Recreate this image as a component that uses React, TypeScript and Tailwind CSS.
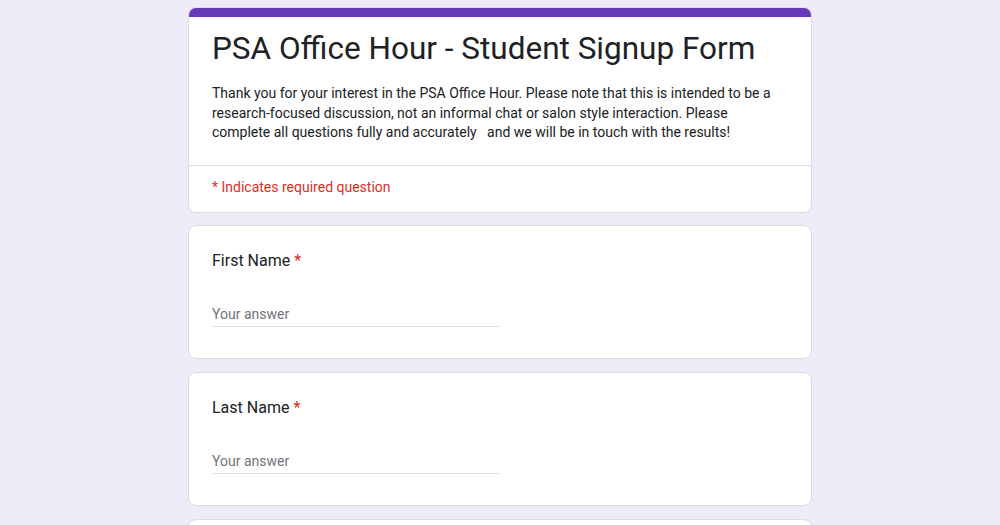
import React from "react";

function QuestionCard({ label }: { label: string }) {
  return (
    <div className="bg-white border border-[#dadce0] rounded-lg px-[23px] pt-[23px] pb-[31px]">
      <div className="text-[16px] leading-6 text-[#202124]">
        {label}
        <span className="text-[#d93025] ml-1">*</span>
      </div>
      <div className="mt-[31px] w-1/2 border-b border-[#e0e0e0] pb-[2px]">
        <div className="text-[14px] leading-5 text-[#70757a]">Your answer</div>
      </div>
    </div>
  );
}

export default function App() {
  return (
    <div
      className="min-h-screen bg-[#f0ebf8] pt-[7px]"
      style={{ fontFamily: "Roboto, 'Liberation Sans', sans-serif" }}
    >
      <div className="w-[624px] mx-auto flex flex-col gap-[13px]">
        <div className="bg-white border border-[#dadce0] rounded-lg overflow-hidden -mb-px">
          <div className="h-[10px] bg-[#673ab7] -mx-px -mt-px" />
          <div className="px-[23px] pt-[12px] pb-[22px]">
            <h1 className="text-[31.5px] leading-10 text-[#202124]">
              PSA Office Hour - Student Signup Form
            </h1>
            <p className="mt-[15px] text-[14px] leading-[19.5px] text-[#202124] whitespace-pre">
              Thank you for your interest in the PSA Office Hour. Please note that this is intended to be a
              <br />
              research-focused discussion, not an informal chat or salon style interaction. Please
              <br />
              {"complete all questions fully and accurately   and we will be in touch with the results!"}
            </p>
          </div>
          <div className="border-t border-[#dadce0] px-[23px] pt-[11px] pb-[15px]">
            <div className="text-[14px] leading-5 text-[#d93025]">
              * Indicates required question
            </div>
          </div>
        </div>
        <QuestionCard label="First Name" />
        <QuestionCard label="Last Name" />
        <QuestionCard label="Email" />
      </div>
    </div>
  );
}
